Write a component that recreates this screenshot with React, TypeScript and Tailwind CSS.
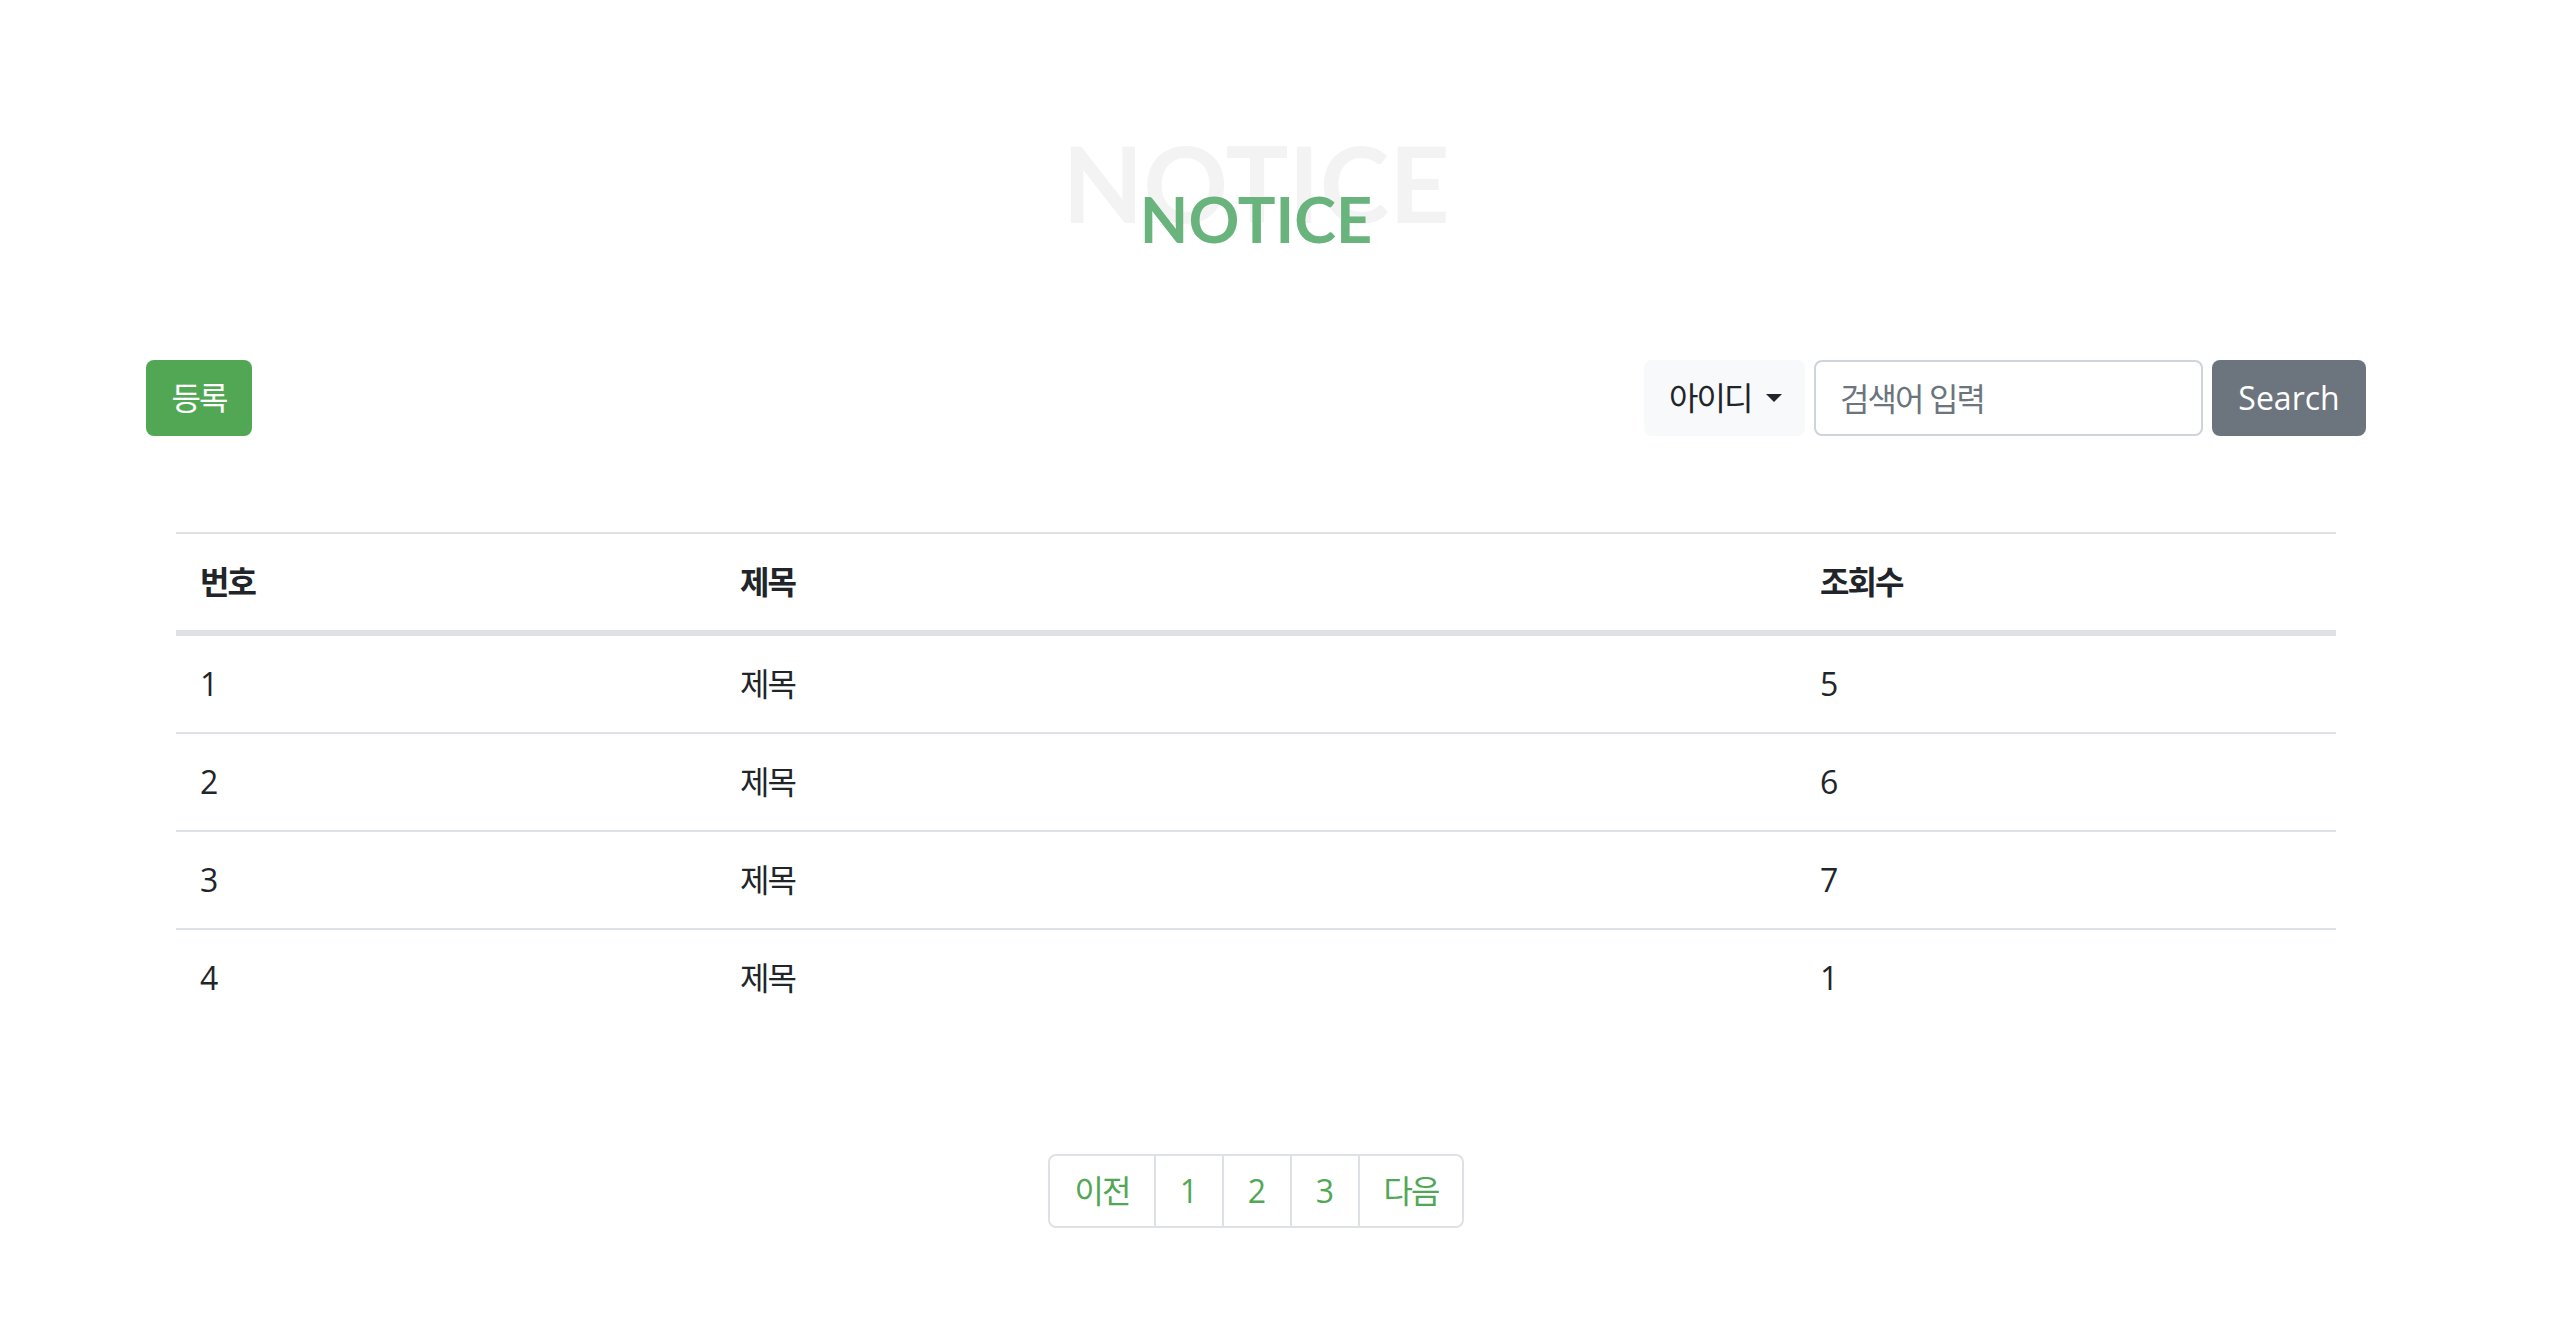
import React from 'react'

const rows = [
  { no: 1, title: '제목', views: 5 },
  { no: 2, title: '제목', views: 6 },
  { no: 3, title: '제목', views: 7 },
  { no: 4, title: '제목', views: 1 },
]

export default function App() {
  return (
    <main className="min-h-screen bg-white font-['Open_Sans','Noto_Sans_CJK_KR',sans-serif] text-[#212529]">
      <div className="w-[2512px] pt-[130px] pb-[100px]">
        {/* title */}
        <div className="grid justify-items-center font-['Lato',sans-serif] font-bold">
          <div className="col-start-1 row-start-1 self-start text-[105px] leading-none text-[#f3f3f3]">NOTICE</div>
          <h1 className="col-start-1 row-start-1 self-start mt-[57px] text-[63px] leading-none text-[#69b37c]">NOTICE</h1>
        </div>

        <div className="mx-auto w-[2220px]">
          {/* toolbar */}
          <div className="mt-[110px] flex items-center justify-between">
            <button className="h-[76px] w-[106px] rounded-[8px] bg-[#52a755] text-[32px] text-white tracking-[-0.06em]">
              등록
            </button>
            <form className="flex gap-[9px]" onSubmit={(e) => e.preventDefault()}>
              <button
                type="button"
                className="flex h-[76px] w-[161px] items-center rounded-[8px] bg-[#f8f9fa] pl-[25px] text-[32px] text-[#212529]"
              >
                <span className="tracking-[-0.06em]">아이디</span>
                <span className="ml-[14px] h-0 w-0 border-x-[8px] border-t-[8px] border-x-transparent border-t-[#212529]" />
              </button>
              <input
                type="text"
                placeholder="검색어 입력"
                className="h-[76px] w-[389px] rounded-[8px] border-2 border-[#ced4da] px-[24px] text-[32px] outline-none placeholder:text-[#6c757d] placeholder:tracking-[-0.06em]"
              />
              <button type="submit" className="h-[76px] w-[154px] rounded-[8px] bg-[#6c757d] text-[32px] text-white">
                Search
              </button>
            </form>
          </div>

          {/* table */}
          <div className="mt-[96px] px-[30px]">
            <table className="w-full border-separate border-spacing-0 text-left text-[32px]">
              <thead>
                <tr>
                  <th className="w-1/4 border-t-2 border-b-4 border-[#dee2e6] px-[24px] py-[24px] font-bold leading-[48px] tracking-[-0.06em]">번호</th>
                  <th className="w-1/2 border-t-2 border-b-4 border-[#dee2e6] px-[24px] py-[24px] font-bold leading-[48px] tracking-[-0.06em]">제목</th>
                  <th className="w-1/4 border-t-2 border-b-4 border-[#dee2e6] px-[24px] py-[24px] font-bold leading-[48px] tracking-[-0.06em]">조회수</th>
                </tr>
              </thead>
              <tbody>
                {rows.map((r) => (
                  <tr key={r.no}>
                    <td className="border-t-2 border-[#dee2e6] px-[24px] py-[24px] leading-[48px]">{r.no}</td>
                    <td className="border-t-2 border-[#dee2e6] px-[24px] py-[24px] leading-[48px] tracking-[-0.06em]">{r.title}</td>
                    <td className="border-t-2 border-[#dee2e6] px-[24px] py-[24px] leading-[48px]">{r.views}</td>
                  </tr>
                ))}
              </tbody>
            </table>
          </div>

          {/* pagination */}
          <div className="mt-[128px] flex justify-center">
            <nav className="flex h-[74px] rounded-[8px] border-2 border-[#dee2e6] text-[32px] text-[#52a755]">
              <a className="flex w-[104px] items-center justify-center tracking-[-0.06em]">이전</a>
              <a className="flex w-[68px] items-center justify-center border-l-2 border-[#dee2e6]">1</a>
              <a className="flex w-[68px] items-center justify-center border-l-2 border-[#dee2e6]">2</a>
              <a className="flex w-[68px] items-center justify-center border-l-2 border-[#dee2e6]">3</a>
              <a className="flex w-[104px] items-center justify-center border-l-2 border-[#dee2e6] tracking-[-0.06em]">다음</a>
            </nav>
          </div>
        </div>
      </div>
    </main>
  )
}
